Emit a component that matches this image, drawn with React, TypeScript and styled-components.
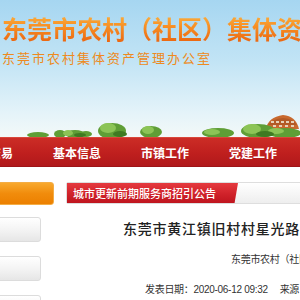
import styled, { createGlobalStyle } from "styled-components";

const GlobalStyle = createGlobalStyle`
  html, body {
    margin: 0;
    padding: 0;
    background: #fff;
    overflow: hidden;
  }
  body {
    font-family: "Liberation Sans", "Noto Sans CJK SC", sans-serif;
  }
`;

const Page = styled.div`
  width: 300px;
  height: 300px;
  overflow: hidden;
`;

const Header = styled.header`
  height: 137px;
  display: flex;
  flex-direction: column;
  background: linear-gradient(#a6d6f1 0%, #c2e4f5 45%, #e4f3f9 82%, #f3f9f8 100%);
  overflow: hidden;
`;

const SiteTitle = styled.h1`
  margin: 13px 0 0 2px;
  font-family: "Noto Sans CJK SC", sans-serif;
  font-size: 25px;
  line-height: 30px;
  font-weight: 700;
  white-space: nowrap;
  background: linear-gradient(#fbb443 0%, #f78f24 45%, #ea6410 100%);
  -webkit-background-clip: text;
  background-clip: text;
  color: transparent;
`;

const SubTitle = styled.div`
  margin: 7px 0 0 2px;
  font-family: "Noto Sans CJK SC", sans-serif;
  font-size: 13px;
  line-height: 16px;
  letter-spacing: 2px;
  color: #ee8a20;
  white-space: nowrap;
`;

const Scenery = styled.svg`
  display: block;
  margin-top: auto;
  width: 300px;
  height: 24px;
`;

const Nav = styled.nav`
  height: 30px;
  display: flex;
  align-items: center;
  margin-left: -55px;
  box-sizing: border-box;
  border-top: 1px solid #d8473a;
  border-bottom: 1px solid #9e1418;
  background: linear-gradient(#cc2d26 0%, #bf1f1e 55%, #b0191b 100%);
`;

const NavItem = styled.a`
  flex: 0 0 88px;
  text-align: center;
  font-family: "Noto Sans CJK SC", sans-serif;
  font-size: 12px;
  font-weight: 700;
  color: #fff;
  white-space: nowrap;
`;

const Body = styled.div`
  display: flex;
  padding-top: 15px;
`;

const Side = styled.aside`
  flex: 0 0 66px;
  display: flex;
  flex-direction: column;
`;

const ActiveTab = styled.div`
  margin-left: -10px;
  width: 64px;
  height: 23px;
  box-sizing: border-box;
  border: 1px solid #f4ad45;
  border-radius: 3px;
  background: linear-gradient(#f8a92e, #f18c0c 50%, #ec8000);
`;

const SideTab = styled.div<{ $gap: number }>`
  margin-left: -10px;
  margin-top: ${(p) => p.$gap}px;
  width: 51px;
  height: 25px;
  flex-shrink: 0;
  box-sizing: border-box;
  border: 1px solid #dcdcdc;
  border-radius: 3px;
  background: linear-gradient(#ffffff, #f4f4f4 50%, #e6e6e6);
`;

const Main = styled.main`
  flex: 1;
  min-width: 0;
`;

const NoticeBar = styled.div`
  height: 22px;
  margin-right: -10px;
  display: flex;
  box-sizing: border-box;
  border: 1px solid #dedede;
  border-radius: 2px;
  background: linear-gradient(#ffffff, #eeeeee);
`;

const NoticeTab = styled.div`
  width: 171px;
  padding-left: 6px;
  box-sizing: border-box;
  font-family: "Noto Sans CJK SC", sans-serif;
  font-size: 11px;
  font-weight: 500;
  line-height: 20px;
  color: #fff;
  white-space: nowrap;
  background: linear-gradient(#e53a3f, #d0222a 55%, #bf151e);
  clip-path: polygon(0 0, 100% 0, 98% 100%, 0 100%);
`;

const Headline = styled.h2`
  margin: 14px 0 0;
  padding-left: 57px;
  font-family: "Noto Sans CJK SC", sans-serif;
  font-size: 14px;
  line-height: 20px;
  font-weight: 500;
  letter-spacing: 0.75px;
  color: #222;
  white-space: nowrap;
`;

const Meta = styled.div<{ $indent: number; $gap: number }>`
  margin-top: ${(p) => p.$gap}px;
  padding-left: ${(p) => p.$indent}px;
  font-family: "Liberation Sans", "Noto Sans CJK SC", sans-serif;
  font-size: 10px;
  line-height: 14px;
  letter-spacing: -0.3px;
  color: #333;
  white-space: nowrap;
`;

const MetaLabel = styled.span`
  margin-left: 12px;
`;

function Trees() {
  return (
    <Scenery viewBox="0 0 300 24">
      <path d="M266 16 Q268 4 283 2 Q296 3 299 16 Z" fill="#c8692e" />
      <path d="M268 12 Q272 6 283 5 Q294 6 297 12 Z" fill="#b35a26" />
      {[271, 276, 281, 286, 291].map((x) => (
        <rect key={x} x={x} y={8} width={3} height={2} fill="#e6d2b8" />
      ))}
      {[273, 279, 285, 291].map((x) => (
        <rect key={x} x={x} y={12} width={3} height={2} fill="#e6d2b8" />
      ))}
      <g fill="#5f9e36">
        <ellipse cx="38" cy="22" rx="11" ry="3" />
        <ellipse cx="60" cy="21" rx="6" ry="4" />
        <ellipse cx="75" cy="21" rx="10" ry="4" />
        <ellipse cx="86" cy="21" rx="6" ry="3" />
        <ellipse cx="112" cy="18" rx="14" ry="8" />
        <ellipse cx="151" cy="19" rx="11" ry="6" />
        <ellipse cx="218" cy="20" rx="16" ry="5" />
        <ellipse cx="258" cy="18" rx="17" ry="7" />
        <ellipse cx="285" cy="20" rx="16" ry="5" />
      </g>
      <g fill="#8cc456">
        <ellipse cx="108" cy="15" rx="8" ry="5" />
        <ellipse cx="148" cy="17" rx="6" ry="4" />
        <ellipse cx="212" cy="19" rx="8" ry="3" />
        <ellipse cx="252" cy="16" rx="9" ry="5" />
        <ellipse cx="276" cy="18" rx="8" ry="3" />
        <ellipse cx="68" cy="20" rx="5" ry="3" />
      </g>
      <g fill="#3f7a22">
        <ellipse cx="120" cy="21" rx="7" ry="3" />
        <ellipse cx="80" cy="22" rx="6" ry="2" />
        <ellipse cx="265" cy="21" rx="9" ry="3" />
      </g>
    </Scenery>
  );
}

export default function App() {
  return (
    <Page>
      <GlobalStyle />
      <Header>
        <SiteTitle>东莞市农村（社区）集体资产管理平台</SiteTitle>
        <SubTitle>东莞市农村集体资产管理办公室</SubTitle>
        <Trees />
      </Header>
      <Nav>
        <NavItem>资产交易</NavItem>
        <NavItem>基本信息</NavItem>
        <NavItem>市镇工作</NavItem>
        <NavItem>党建工作</NavItem>
      </Nav>
      <Body>
        <Side>
          <ActiveTab />
          <SideTab $gap={12} />
          <SideTab $gap={14} />
          <SideTab $gap={14} />
        </Side>
        <Main>
          <NoticeBar>
            <NoticeTab>城市更新前期服务商招引公告</NoticeTab>
          </NoticeBar>
          <Headline>东莞市黄江镇旧村村星光路地块</Headline>
          <Meta $indent={165} $gap={15}>
            东莞市农村（社区）集体资产管理办公室
          </Meta>
          <Meta $indent={79} $gap={16}>
            发表日期：2020-06-12 09:32
            <MetaLabel>来源：</MetaLabel>
          </Meta>
        </Main>
      </Body>
    </Page>
  );
}
